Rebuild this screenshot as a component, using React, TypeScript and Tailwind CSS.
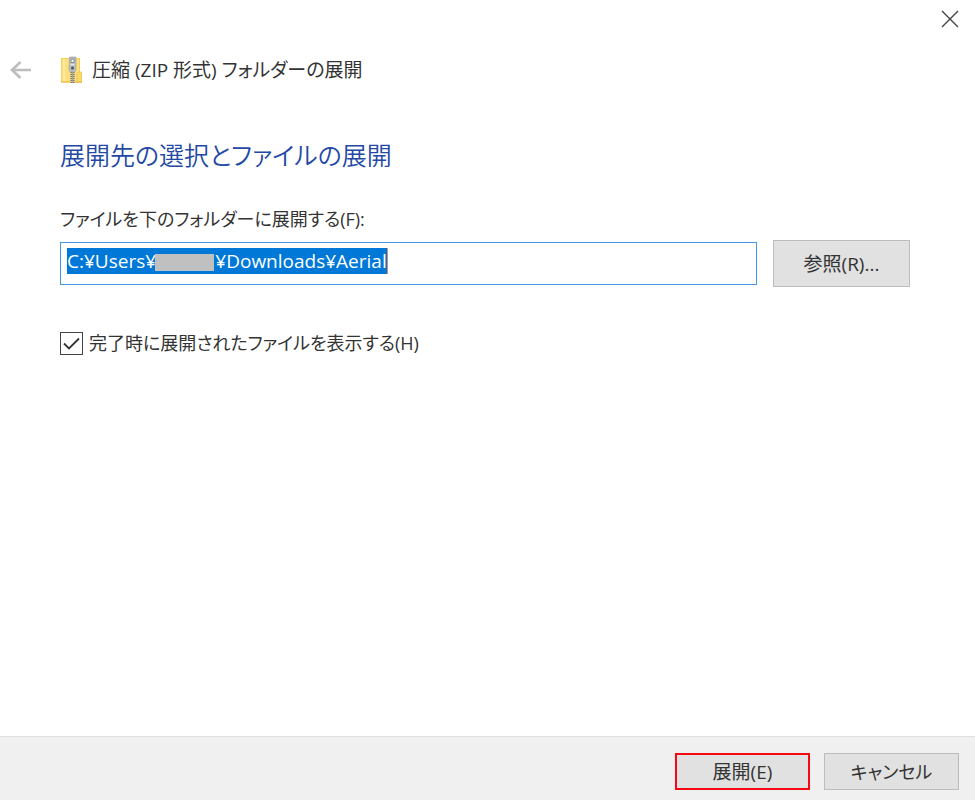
import React, { useEffect, useRef, useState } from 'react';

const BackArrow = () => (
  <svg width="22" height="18" viewBox="0 0 22 18" fill="none" stroke="#bdbdbd" strokeWidth="2.6">
    <path d="M21 9H2M10.500 1L2 9l8.500 8" />
  </svg>
);

const CloseIcon = () => (
  <svg width="18" height="18" viewBox="0 0 18 18" fill="none" stroke="#444444" strokeWidth="1.4">
    <path d="M1 1l16 16M17 1L1 17" />
  </svg>
);

const ZipFolderIcon = () => (
  <svg width="22" height="28" viewBox="0 0 22 28">
    <path d="M1 2h19v14h1.500v10.500H1z" fill="#f6cf5a" />
    <path d="M2 3h17v22.500H2z" fill="#fddf7c" />
    <path d="M3 3h2v22.500H3z" fill="#fbe9a9" />
    <path d="M17 17.500l1.500-1.500h3v10.500H17z" fill="#fbd96c" stroke="#e8bf48" strokeWidth="0.7" />
    <path d="M1 26h20.500" stroke="#e3b843" strokeWidth="1" />
    <path d="M10 14h5v12.500h-5z" fill="#d8cba0" />
    <path d="M12.500 14v13" stroke="#857c68" strokeWidth="4" strokeDasharray="1 1" />
    <path d="M12.500 14v13" stroke="#aaa184" strokeWidth="1" />
    <path d="M9.500 1h6.500v13l-1.500 2h-4l-1.500-2z" fill="#b9bec2" stroke="#9a9ea2" strokeWidth="0.6" />
    <path d="M11 3h3v3.500h-3z" fill="#f2f4f5" stroke="#777c80" strokeWidth="0.8" />
    <path d="M10.500 8.500h4" stroke="#e6e9eb" strokeWidth="1.200" />
    <circle cx="12.500" cy="12" r="1.500" fill="#4f5356" />
  </svg>
);

export default function App() {
  const pathRef = useRef<HTMLInputElement>(null);
  const [path, setPath] = useState('C:¥Users¥\u00a0\u00a0\u00a0\u00a0\u00a0\u00a0\u00a0\u00a0\u00a0\u00a0\u00a0\u00a0¥Downloads¥Aerial');
  const [showFiles, setShowFiles] = useState(true);

  useEffect(() => {
    pathRef.current?.focus();
    pathRef.current?.select();
  }, []);

  return (
    <div className="flex min-h-screen flex-col bg-white font-['Open_Sans','Noto_Sans_CJK_JP',sans-serif] text-[19px] leading-7 text-[#333333] [font-feature-settings:'palt']">
      <div className="flex justify-end px-4 pt-[10px]">
        <button type="button" aria-label="閉じる">
          <CloseIcon />
        </button>
      </div>

      <header className="mt-7 flex h-7 items-center pl-[10px]">
        <button type="button" aria-label="戻る" className="w-[50px]">
          <BackArrow />
        </button>
        <ZipFolderIcon />
        <h1 className="ml-[10px]">圧縮 (ZIP 形式) フォルダーの展開</h1>
      </header>

      <main className="flex-1 pr-[65px] pl-[60px]">
        <h2 className="mt-[51px] text-[25px] leading-10 font-[350] text-[#2349a5]">展開先の選択とファイルの展開</h2>

        <label htmlFor="path" className="mt-[30px] block text-[18px]">
          ファイルを下のフォルダーに展開する(F):
        </label>
        <div className="mt-[7px] flex items-center gap-4">
          <div className="relative flex-1">
            <input
              id="path"
              ref={pathRef}
              type="text"
              value={path}
              onChange={(e) => setPath(e.target.value)}
              className="block h-[43px] w-full border border-[#4296e3] bg-white px-[6px] pt-[3px] pb-2 outline-none selection:bg-[#0078d7] selection:text-white"
            />
            {/* user name is hidden */}
            <span className="pointer-events-none absolute top-3 left-[95px] h-[17px] w-[59px] bg-[#c0c0c0]" />
            {/* caret at the end of the selection */}
            <span className="pointer-events-none absolute top-[6px] left-[327px] h-[26px] w-px bg-[#e0876a]" />
          </div>
          <button type="button" className="h-[47px] w-[137px] border border-[#bcbcbc] bg-[#e1e1e1]">
            参照(R)...
          </button>
        </div>

        <label className="mt-[42px] flex items-center gap-[6px] text-[18px]">
          <span className="relative flex">
            <input
              type="checkbox"
              checked={showFiles}
              onChange={(e) => setShowFiles(e.target.checked)}
              className="peer size-[23px] appearance-none border border-[#444444] bg-white"
            />
            <svg
              className="pointer-events-none absolute inset-0 hidden peer-checked:block"
              width="23"
              height="23"
              viewBox="0 0 23 23"
              fill="none"
              stroke="#333333"
              strokeWidth="1.800"
            >
              <path d="M4 11.500l5 5L19 6.500" />
            </svg>
          </span>
          完了時に展開されたファイルを表示する(H)
        </label>
      </main>

      <footer className="flex justify-end gap-[14px] border-t border-[#dfdfdf] bg-[#f0f0f0] px-4 pt-4 pb-[10px]">
        <button type="button" className="h-[37px] w-[135px] border-2 border-[#f50a14] bg-[#e1e1e1]">
          展開(E)
        </button>
        <button type="button" className="h-[37px] w-[135px] border border-[#bcbcbc] bg-[#e1e1e1] text-[18px]">
          キャンセル
        </button>
      </footer>
    </div>
  );
}
